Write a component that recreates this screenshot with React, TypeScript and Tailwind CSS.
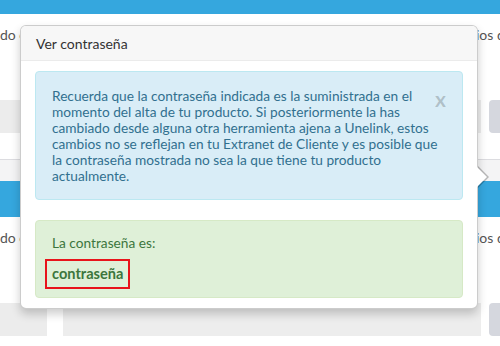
function BackgroundCard({ barHeight }: { barHeight: string }) {
  return (
    <div>
      <div className={`${barHeight} bg-[#35a7de]`} />
      <div className="flex h-[86px] overflow-hidden pt-[11px] text-[14px] leading-[20px] text-[#555] whitespace-nowrap">
        <span className="w-[476px] shrink-0">do en el</span>
        <span>ios de la</span>
      </div>
      <div className="flex h-[33px] overflow-hidden">
        <div className="w-[47px] shrink-0 bg-[#ececec]" />
        <div className="ml-[16px] w-[418px] shrink-0 bg-[#ededed]" />
        <div className="ml-[8px] flex-1 rounded-l-[4px] bg-[#d5d7de]" />
      </div>
      <div className="h-[26px] bg-white" />
      <div className="h-[22px] border-t border-[#dcdce0] bg-[#f4f4f5]" />
    </div>
  )
}

export default function App() {
  return (
    <div className="relative h-[346px] w-[500px] overflow-hidden bg-white font-['Lato',sans-serif]">
      <BackgroundCard barHeight="h-[14px]" />
      <BackgroundCard barHeight="h-[36px]" />

      <div className="absolute left-[20px] top-[25px] w-[458px] rounded-[6px] border border-black/20 bg-white shadow-[0_5px_10px_rgba(0,0,0,0.2)]">
        <div className="absolute right-[-12px] top-[140px] h-0 w-0 border-y-[11px] border-l-[11px] border-y-transparent border-l-black/25" />
        <div className="absolute right-[-10px] top-[141px] h-0 w-0 border-y-[10px] border-l-[10px] border-y-transparent border-l-white" />

        <div className="flex h-[35px] items-center rounded-t-[5px] border-b border-[#ebebeb] bg-[#f7f7f7] px-[15px] text-[14px] text-[#333]">
          Ver contraseña
        </div>

        <div className="px-[14px] pt-[10px] pb-[10px]">
          <div className="relative mb-[20px] rounded-[4px] border border-[#bce8f1] bg-[#d9edf7] pt-[16px] pb-[15px] pl-[16px] pr-[20px] text-[13.7px] leading-[16px] text-[#31708f]">
            <span className="absolute right-[16px] top-[16px] text-[21px] font-bold leading-[21px] text-black/20">
              x
            </span>
            Recuerda que la contraseña indicada es la suministrada en el
            <br />
            momento del alta de tu producto. Si posteriormente la has
            <br />
            cambiado desde alguna otra herramienta ajena a Unelink, estos
            <br />
            cambios no se reflejan en tu Extranet de Cliente y es posible que
            <br />
            la contraseña mostrada no sea la que tiene tu producto
            <br />
            actualmente.
          </div>

          <div className="rounded-[4px] border border-[#d6e9c6] bg-[#dff0d8] px-[16px] pt-[14px] pb-[15px] text-[13.7px] leading-[16px] text-[#3c763d]">
            <p>La contraseña es:</p>
            <p className="mt-[15px]">
              <span className="inline-block text-[14.6px] font-bold outline-2 outline-offset-[5px] outline-[#e8141b]">
                contraseña
              </span>
            </p>
          </div>
        </div>
      </div>
    </div>
  )
}
